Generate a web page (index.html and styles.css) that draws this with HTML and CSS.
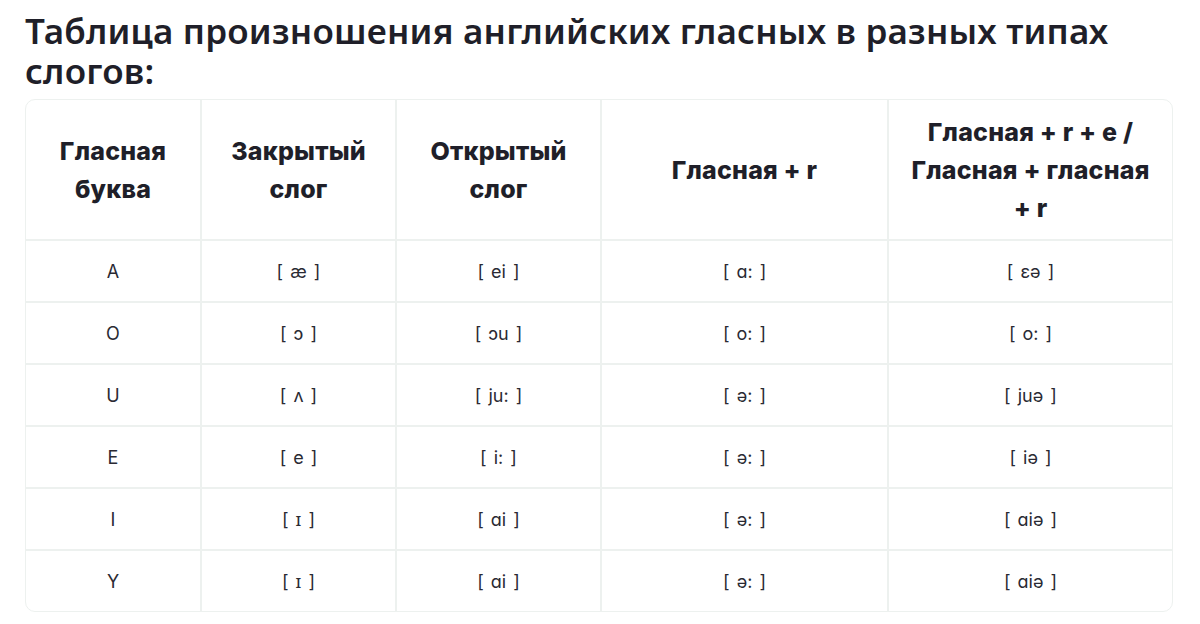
FILE: index.html
```html
<!DOCTYPE html>
<html lang="ru">
<head>
<meta charset="utf-8">
<title>Таблица произношения</title>
<link rel="stylesheet" href="styles.css">
</head>
<body>
<main class="page">
  <h1 class="title">Таблица произношения английских гласных в разных типах слогов:</h1>
  <div class="table-wrap">
    <table class="vowels">
      <colgroup>
        <col class="c1"><col class="c2"><col class="c3"><col class="c4"><col class="c5">
      </colgroup>
      <thead>
        <tr>
          <th>Гласная<br>буква</th>
          <th>Закрытый<br>слог</th>
          <th>Открытый<br>слог</th>
          <th>Гласная + r</th>
          <th>Гласная + r + e /<br>Гласная + гласная<br>+ r</th>
        </tr>
      </thead>
      <tbody>
        <tr><td>A</td><td>[ æ ]</td><td>[ ei ]</td><td>[ ɑ: ]</td><td>[ ɛə ]</td></tr>
        <tr><td>O</td><td>[ ɔ ]</td><td>[ ɔu ]</td><td>[ o: ]</td><td>[ o: ]</td></tr>
        <tr><td>U</td><td>[ ʌ ]</td><td>[ ju: ]</td><td>[ ə: ]</td><td>[ juə ]</td></tr>
        <tr><td>E</td><td>[ e ]</td><td>[ i: ]</td><td>[ ə: ]</td><td>[ iə ]</td></tr>
        <tr><td>I</td><td>[ ɪ ]</td><td>[ ɑi ]</td><td>[ ə: ]</td><td>[ ɑiə ]</td></tr>
        <tr><td>Y</td><td>[ ɪ ]</td><td>[ ɑi ]</td><td>[ ə: ]</td><td>[ ɑiə ]</td></tr>
      </tbody>
    </table>
  </div>
</main>
</body>
</html>
```

FILE: styles.css
```css
html, body {
  margin: 0;
  padding: 0;
  background: #ffffff;
}

.page {
  padding: 11px 27px 0 25px;
  color: #1f1f29;
}

.title {
  margin: 0 0 8px 0;
  font-family: "Noto Sans", "Open Sans", sans-serif;
  font-weight: 600;
  font-size: 35px;
  line-height: 40px;
  letter-spacing: 0.2px;
  color: #1f1f29;
}

.table-wrap {
  width: 1148px;
  box-sizing: border-box;
  border: 1px solid #edf1ef;
  border-radius: 10px;
  overflow: hidden;
}

.vowels {
  width: 100%;
  border-collapse: collapse;
  table-layout: fixed;
}

.c1 { width: 175px; }
.c2 { width: 195px; }
.c3 { width: 205px; }
.c4 { width: 287px; }
.c5 { width: auto; }

.vowels th,
.vowels td {
  border: 2px solid #edf1ef;
  text-align: center;
  vertical-align: middle;
  padding: 0 4px;
}

.vowels tr:first-child th { border-top: none; }
.vowels tr:last-child td { border-bottom: none; }
.vowels th:first-child, .vowels td:first-child { border-left: none; }
.vowels th:last-child, .vowels td:last-child { border-right: none; }

.vowels th {
  height: 139px;
  font-family: Inter, Roboto, sans-serif;
  font-weight: 800;
  font-size: 25px;
  line-height: 38px;
  letter-spacing: 0.2px;
  color: #1f1f29;
}

.vowels td {
  height: 60px;
  font-family: Inter, "Noto Sans", sans-serif;
  font-weight: 400;
  font-size: 18px;
  word-spacing: 2px;
  color: #2a2a33;
}
```
